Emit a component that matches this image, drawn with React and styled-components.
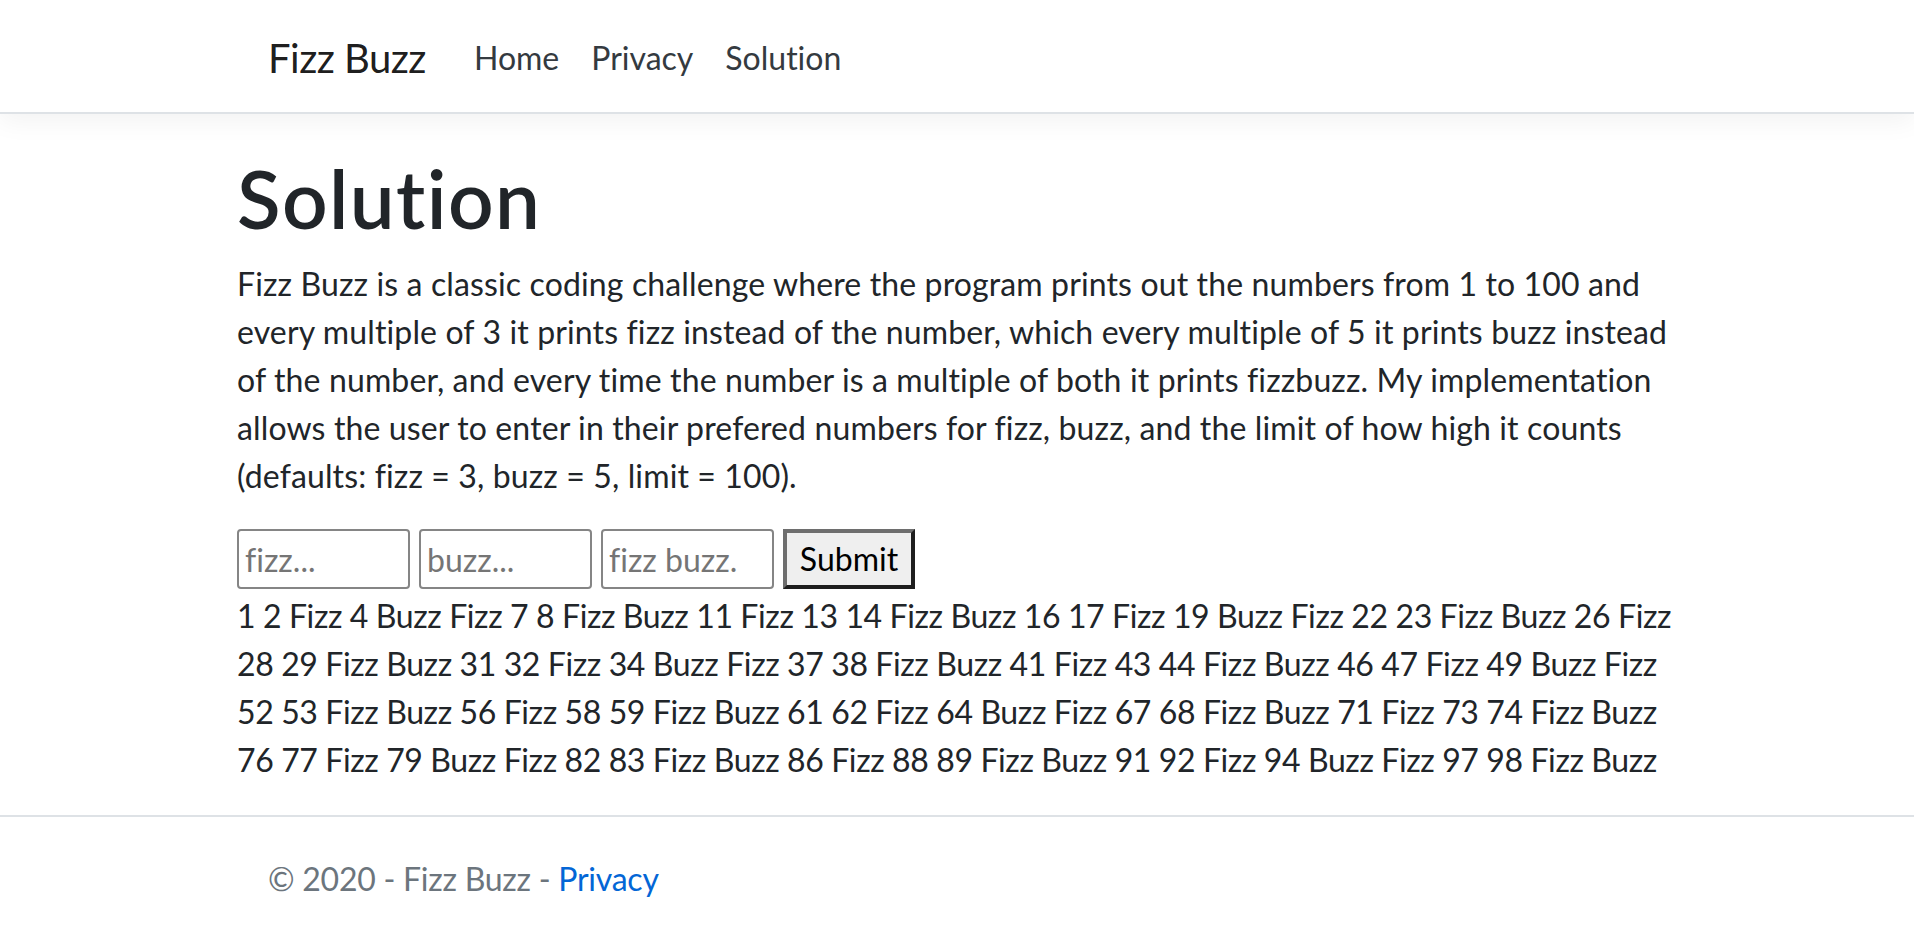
import React from "react";
import styled, { createGlobalStyle } from "styled-components";

const GlobalStyle = createGlobalStyle`
  * { box-sizing: border-box; }
  body {
    margin: 0;
    background: #fff;
    color: #212529;
    font-family: Lato, "Open Sans", sans-serif;
    font-size: 32px;
    line-height: 1.5;
    font-variant-ligatures: none;
  }
`;

const Page = styled.div`
  display: flex;
  flex-direction: column;
  min-height: 100vh;
`;

const Container = styled.div`
  width: 1440px;
  margin: 0 auto;
  padding: 0 ${(p) => (p.$flush ? 0 : 31)}px;
`;

const Header = styled.header`
  background: #fff;
  border-bottom: 2px solid #dee2e6;
  box-shadow: 0 8px 24px rgba(0, 0, 0, 0.05);
  padding: 18px 0 14px;
`;

const NavRow = styled(Container)`
  display: flex;
  align-items: center;
`;

const Brand = styled.a`
  font-size: 40px;
  line-height: 60px;
  padding: 10px 0;
  margin-right: 32px;
  letter-spacing: -0.5px;
  color: rgba(0, 0, 0, 0.9);
  text-decoration: none;
`;

const NavList = styled.ul`
  display: flex;
  list-style: none;
  margin: 0;
  padding: 0;
`;

const NavLink = styled.a`
  display: block;
  padding: 16px;
  color: #343a40;
  text-decoration: none;
`;

const Main = styled.main`
  margin-top: 32px;
`;

const Title = styled.h1`
  font-size: 80px;
  font-weight: 600;
  line-height: 1.2;
  letter-spacing: 1.4px;
  margin: 4px 0 14px;
`;

const Lead = styled.p`
  margin: 0 0 29px;
  letter-spacing: 0.13px;
`;

const Form = styled.form`
  display: flex;
  gap: 9px;
  height: 60px;
`;

const Field = styled.input`
  width: 173px;
  height: 60px;
  padding: 2px 6px;
  border: 2px solid #858585;
  border-radius: 4px;
  font: inherit;
  color: #212529;
  background: #fff;
  &::placeholder {
    color: #757575;
  }
`;

const Submit = styled.button`
  width: 132px;
  height: 60px;
  padding: 0;
  border-style: solid;
  border-width: 4px;
  border-color: #6e6e6e #1e1e1e #1e1e1e #6e6e6e;
  background: #efefef;
  color: #000;
  font: inherit;
`;

const Output = styled.div`
  margin-top: 3px;
  letter-spacing: -0.39px;
`;

const Footer = styled.footer`
  margin-top: auto;
  border-top: 2px solid #dee2e6;
  padding-top: 5px;
  line-height: 114px;
  letter-spacing: -0.25px;
  color: #6c757d;
  white-space: nowrap;
`;

const FooterLink = styled.a`
  color: #0366d6;
  text-decoration: none;
`;

function fizzBuzz(fizz, buzz, limit) {
  const out = [];
  for (let i = 1; i <= limit; i++) {
    if (i % fizz === 0 && i % buzz === 0) out.push("Fizz Buzz");
    else if (i % fizz === 0) out.push("Fizz");
    else if (i % buzz === 0) out.push("Buzz");
    else out.push(String(i));
  }
  return out.join(" ");
}

export default function App() {
  return (
    <Page>
      <GlobalStyle />
      <Header>
        <NavRow>
          <Brand href="#">Fizz Buzz</Brand>
          <NavList>
            <li><NavLink href="#">Home</NavLink></li>
            <li><NavLink href="#">Privacy</NavLink></li>
            <li><NavLink href="#">Solution</NavLink></li>
          </NavList>
        </NavRow>
      </Header>

      <Main>
        <Container $flush>
          <Title>Solution</Title>
          <Lead>
            Fizz Buzz is a classic coding challenge where the program prints out the numbers from 1 to 100 and
            every multiple of 3 it prints fizz instead of the number, which every multiple of 5 it prints buzz
            instead of the number, and every time the number is a multiple of both it prints fizzbuzz. My
            implementation allows the user to enter in their prefered numbers for fizz, buzz, and the limit of
            how high it counts (defaults: fizz = 3, buzz = 5, limit = 100).
          </Lead>
          <Form onSubmit={(e) => e.preventDefault()}>
            <Field placeholder="fizz..." />
            <Field placeholder="buzz..." />
            <Field placeholder="fizz buzz." />
            <Submit type="submit">Submit</Submit>
          </Form>
          <Output>{fizzBuzz(3, 5, 100)}</Output>
        </Container>
      </Main>

      <Footer>
        <Container>
          © 2020 - Fizz Buzz - <FooterLink href="#">Privacy</FooterLink>
        </Container>
      </Footer>
    </Page>
  );
}
